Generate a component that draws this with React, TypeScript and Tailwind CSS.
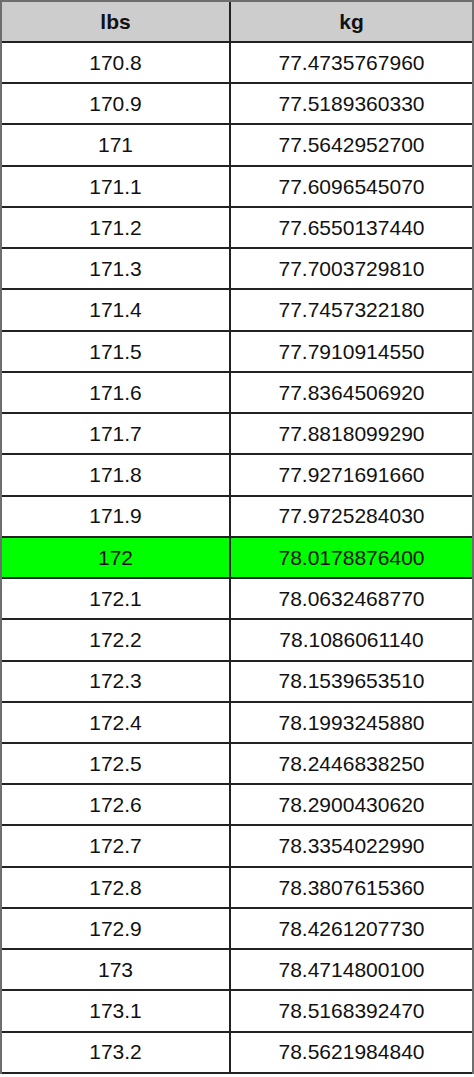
import React from "react";

const rows: [string, string][] = [
  ["170.8", "77.4735767960"],
  ["170.9", "77.5189360330"],
  ["171", "77.5642952700"],
  ["171.1", "77.6096545070"],
  ["171.2", "77.6550137440"],
  ["171.3", "77.7003729810"],
  ["171.4", "77.7457322180"],
  ["171.5", "77.7910914550"],
  ["171.6", "77.8364506920"],
  ["171.7", "77.8818099290"],
  ["171.8", "77.9271691660"],
  ["171.9", "77.9725284030"],
  ["172", "78.0178876400"],
  ["172.1", "78.0632468770"],
  ["172.2", "78.1086061140"],
  ["172.3", "78.1539653510"],
  ["172.4", "78.1993245880"],
  ["172.5", "78.2446838250"],
  ["172.6", "78.2900430620"],
  ["172.7", "78.3354022990"],
  ["172.8", "78.3807615360"],
  ["172.9", "78.4261207730"],
  ["173", "78.4714800100"],
  ["173.1", "78.5168392470"],
  ["173.2", "78.5621984840"],
];

export default function App() {
  return (
    <div
      className="w-[474px] h-[1077px] bg-white text-[#111] text-[21px]"
      style={{ fontFamily: '"Liberation Sans", Arial, sans-serif' }}
    >
      <div className="w-[474px] border-t-2 border-l-2 border-r-2 border-[#6e6e6e] flex flex-col">
        <div className="flex h-[41px] bg-[#cdcdcd] border-b-2 border-[#222]">
          <div className="w-[227px] flex items-center justify-center font-bold">lbs</div>
          <div className="w-[2px] bg-[#222]" />
          <div className="flex-1 flex items-center justify-center font-bold">kg</div>
        </div>
        {rows.map(([a, b]) => (
          <div
            key={a}
            className={
              a === "172"
                ? "flex h-[41.24px] border-b-2 border-[#222] bg-[#00ff00]"
                : "flex h-[41.24px] border-b-2 border-[#222] bg-white"
            }
          >
            <div className="w-[227px] flex items-center justify-center">{a}</div>
            <div className="w-[2px] bg-[#222]" />
            <div className="flex-1 flex items-center justify-center">{b}</div>
          </div>
        ))}
      </div>
    </div>
  );
}
